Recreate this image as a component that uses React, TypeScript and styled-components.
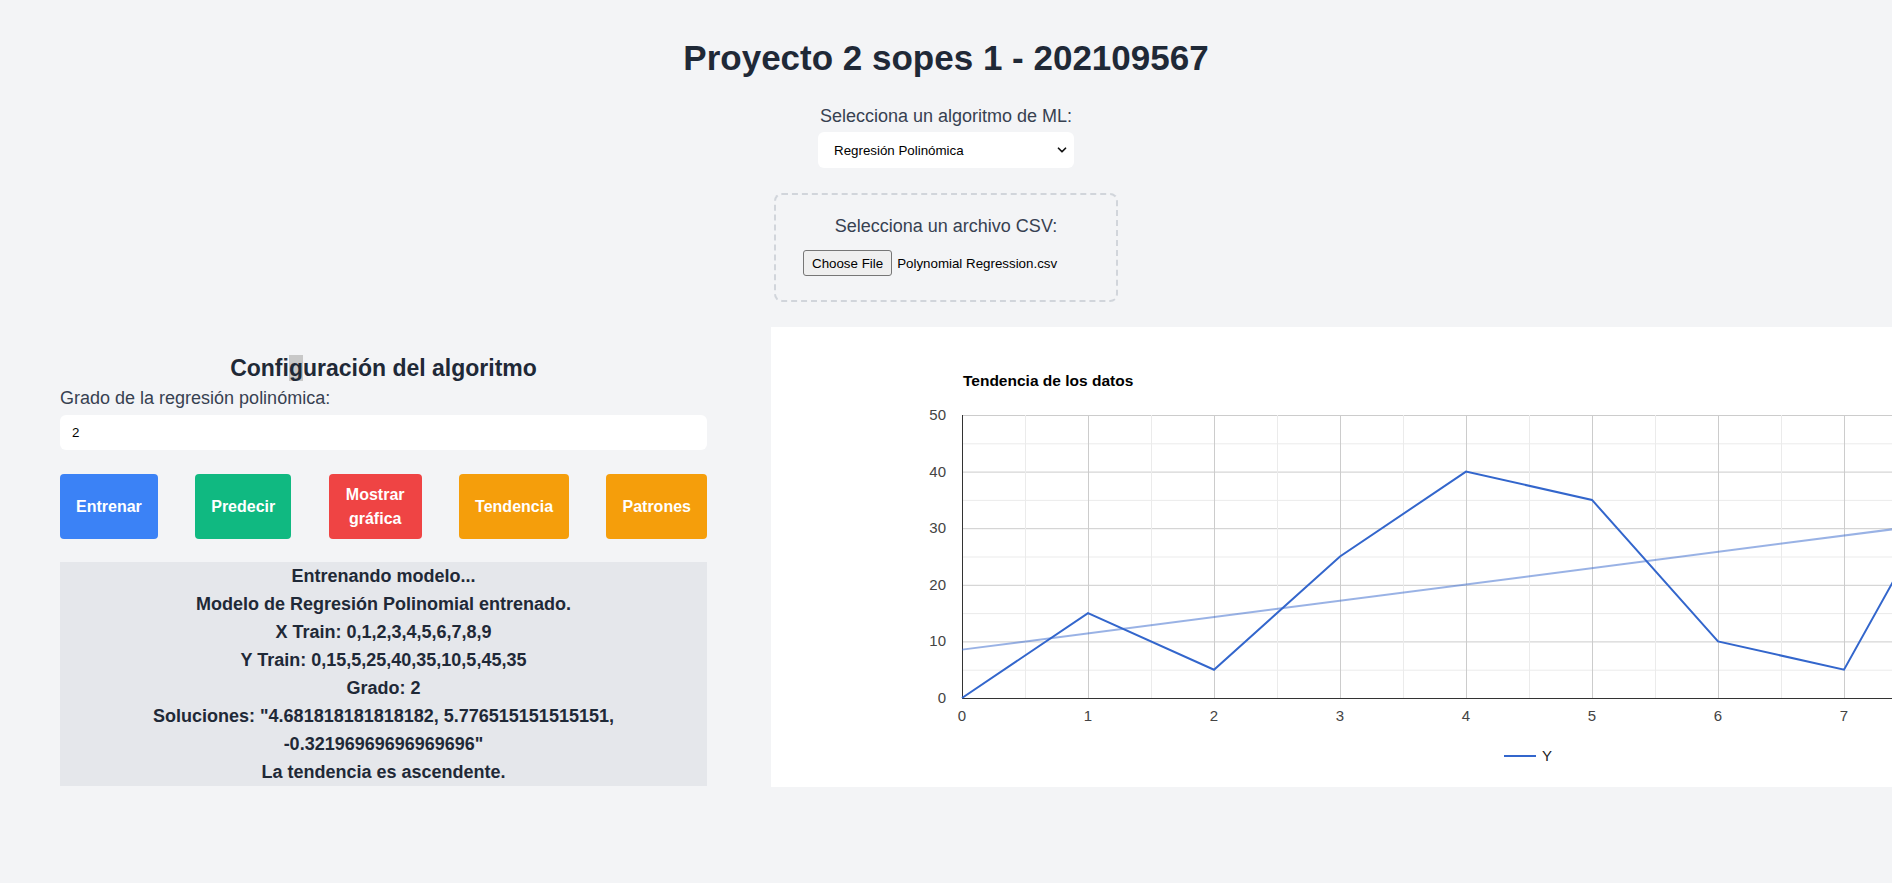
import type React from "react"
import styled, { createGlobalStyle } from "styled-components"
import { ChevronDown } from "lucide-react"

const X_TRAIN = [0, 1, 2, 3, 4, 5, 6, 7, 8, 9]
const Y_TRAIN = [0, 15, 5, 25, 40, 35, 10, 5, 45, 35]

// chart geometry, in px inside the chart card
const CARD_W = 1121
const CARD_H = 460
const PLOT_LEFT = 191
const PLOT_TOP = 88
const PLOT_W = 1134
const PLOT_H = 283
const X_MAX = 9
const Y_MAX = 50

const px = (x: number) => PLOT_LEFT + (x / X_MAX) * PLOT_W
const py = (y: number) => PLOT_TOP + PLOT_H - (y / Y_MAX) * PLOT_H

// least squares line for the trendline
const trend = () => {
  const n = X_TRAIN.length
  const mx = X_TRAIN.reduce((a, b) => a + b, 0) / n
  const my = Y_TRAIN.reduce((a, b) => a + b, 0) / n
  let sxy = 0
  let sxx = 0
  X_TRAIN.forEach((x, i) => {
    sxy += (x - mx) * (Y_TRAIN[i] - my)
    sxx += (x - mx) * (x - mx)
  })
  const slope = sxy / sxx
  return { slope, intercept: my - slope * mx }
}

const TrendChart: React.FC = () => {
  const { slope, intercept } = trend()
  const points = X_TRAIN.map((x, i) => `${px(x)},${py(Y_TRAIN[i])}`).join(" ")
  const halfSteps = Array.from({ length: X_MAX * 2 + 1 }, (_, i) => i / 2)
  const ySteps = Array.from({ length: 11 }, (_, i) => i * 5)
  // the card is narrower than the plot, so only ticks that fit get a label
  const visibleTicks = X_TRAIN.filter((v) => px(v) + 6 < CARD_W)

  return (
    <svg width={CARD_W} height={CARD_H} fontFamily="'Liberation Sans', Arial, sans-serif">
      <text x={192} y={59} fontSize={15.5} fontWeight="bold" fill="#000">
        Tendencia de los datos
      </text>

      {ySteps.map((v) => (
        <line
          key={`h${v}`}
          x1={PLOT_LEFT}
          x2={PLOT_LEFT + PLOT_W}
          y1={py(v) + 0.5}
          y2={py(v) + 0.5}
          stroke={v % 10 === 0 ? "#cccccc" : "#ebebeb"}
        />
      ))}
      {halfSteps.map((v) => (
        <line
          key={`v${v}`}
          x1={px(v) + 0.5}
          x2={px(v) + 0.5}
          y1={PLOT_TOP}
          y2={PLOT_TOP + PLOT_H}
          stroke={Number.isInteger(v) ? "#cccccc" : "#ebebeb"}
        />
      ))}

      <line x1={PLOT_LEFT + 0.5} x2={PLOT_LEFT + 0.5} y1={PLOT_TOP} y2={PLOT_TOP + PLOT_H} stroke="#333" />
      <line x1={PLOT_LEFT} x2={PLOT_LEFT + PLOT_W} y1={py(0) + 0.5} y2={py(0) + 0.5} stroke="#333" />

      {ySteps
        .filter((v) => v % 10 === 0)
        .map((v) => (
          <text key={`yl${v}`} x={175} y={py(v) + 5} fontSize={15} fill="#444" textAnchor="end">
            {v}
          </text>
        ))}
      {visibleTicks.map((v) => (
        <text key={`xl${v}`} x={px(v)} y={394} fontSize={15} fill="#444" textAnchor="middle">
          {v}
        </text>
      ))}

      <line
        x1={px(0)}
        y1={py(intercept)}
        x2={px(X_MAX)}
        y2={py(intercept + slope * X_MAX)}
        stroke="#3366cc"
        strokeOpacity={0.5}
        strokeWidth={2}
      />
      <polyline points={points} fill="none" stroke="#3366cc" strokeWidth={2} />

      <line x1={733} x2={765} y1={429} y2={429} stroke="#3366cc" strokeWidth={2} />
      <text x={771} y={434} fontSize={15} fill="#222">
        Y
      </text>
    </svg>
  )
}

const App: React.FC = () => {
  return (
    <>
      <GlobalStyle />
      <Page>
        <Header>
          <Title>Proyecto 2 sopes 1 - 202109567</Title>
          <FieldLabel>Selecciona un algoritmo de ML:</FieldLabel>
          <SelectWrap>
            <Select defaultValue="poly">
              <option value="poly">Regresión Polinómica</option>
            </Select>
            <SelectArrow size={14} strokeWidth={3} />
          </SelectWrap>
          <UploadBox>
            <FieldLabel>Selecciona un archivo CSV:</FieldLabel>
            <FileRow>
              <FileButton type="button">Choose File</FileButton>
              <FileName>Polynomial Regression.csv</FileName>
            </FileRow>
          </UploadBox>
        </Header>

        <Main>
          <ConfigColumn>
            <SectionTitle>
              Confi<Selected>g</Selected>uración del algoritmo
            </SectionTitle>
            <InputLabel>Grado de la regresión polinómica:</InputLabel>
            <NumberInput type="text" defaultValue="2" />
            <ButtonRow>
              <ActionButton $color="#3b82f6">Entrenar</ActionButton>
              <ActionButton $color="#10b981">Predecir</ActionButton>
              <ActionButton $color="#ef4444" $maxWidth={93}>
                Mostrar gráfica
              </ActionButton>
              <ActionButton $color="#f59e0b">Tendencia</ActionButton>
              <ActionButton $color="#f59e0b">Patrones</ActionButton>
            </ButtonRow>
            <OutputBox>
              <OutputLine>Entrenando modelo...</OutputLine>
              <OutputLine>Modelo de Regresión Polinomial entrenado.</OutputLine>
              <OutputLine>X Train: 0,1,2,3,4,5,6,7,8,9</OutputLine>
              <OutputLine>Y Train: 0,15,5,25,40,35,10,5,45,35</OutputLine>
              <OutputLine>Grado: 2</OutputLine>
              <OutputLine>Soluciones: "4.681818181818182, 5.776515151515151, -0.32196969696969696"</OutputLine>
              <OutputLine>La tendencia es ascendente.</OutputLine>
            </OutputBox>
          </ConfigColumn>

          <ChartCard>
            <TrendChart />
          </ChartCard>
        </Main>
      </Page>
    </>
  )
}

const GlobalStyle = createGlobalStyle`
  html, body {
    margin: 0;
    background-color: #f3f4f6;
    overflow: hidden;
  }
  body {
    font-family: "Liberation Sans", Arial, sans-serif;
    color: #1f2937;
  }
`

const Page = styled.div`
  min-height: 883px;
  padding: 38px 0 0 60px;
  box-sizing: border-box;
`

const Header = styled.header`
  display: flex;
  flex-direction: column;
  align-items: center;
  width: 1772px;
`

const Title = styled.h1`
  margin: 0;
  font-size: 35px;
  line-height: 40px;
  font-weight: bold;
  color: #1f2937;
`

const FieldLabel = styled.label`
  display: block;
  margin-top: 24px;
  font-size: 18px;
  line-height: 28px;
  color: #374151;
`

const SelectWrap = styled.div`
  position: relative;
  margin-top: 2px;
  width: 256px;
`

const Select = styled.select`
  appearance: none;
  width: 100%;
  height: 36px;
  padding: 0 16px;
  border: none;
  border-radius: 6px;
  background-color: #ffffff;
  font-family: "Liberation Sans", Arial, sans-serif;
  font-size: 13.33px;
  color: #000;
`

const SelectArrow = styled(ChevronDown)`
  position: absolute;
  right: 5px;
  top: 11px;
  color: #111;
  pointer-events: none;
`

const UploadBox = styled.div`
  display: flex;
  flex-direction: column;
  align-items: center;
  margin-top: 25px;
  width: 344px;
  padding: 17px 0 24px;
  box-sizing: border-box;
  border: 2px dashed #d1d5db;
  border-radius: 8px;

  & > label {
    margin-top: 0;
  }
`

const FileRow = styled.div`
  display: flex;
  align-items: center;
  gap: 5px;
  margin-top: 10px;
  width: 286px;
`

const FileButton = styled.button`
  flex-shrink: 0;
  height: 26px;
  padding: 0 8px;
  border: 1px solid #767676;
  border-radius: 3px;
  background-color: #efefef;
  font-family: "Liberation Sans", Arial, sans-serif;
  font-size: 13.33px;
  color: #000;
  white-space: nowrap;
`

const FileName = styled.span`
  font-size: 13.33px;
  color: #000;
  white-space: nowrap;
`

const Main = styled.main`
  display: flex;
  align-items: flex-start;
  gap: 64px;
  margin-top: 25px;
`

const ConfigColumn = styled.section`
  display: flex;
  flex-direction: column;
  flex-shrink: 0;
  width: 647px;
  padding-top: 25px;
`

const SectionTitle = styled.h2`
  margin: 0;
  text-align: center;
  font-size: 23px;
  line-height: 32px;
  font-weight: bold;
  color: #1f2937;
`

const Selected = styled.span`
  background-color: #c8c8c8;
`

const InputLabel = styled.label`
  font-size: 18px;
  line-height: 28px;
  color: #374151;
`

const NumberInput = styled.input`
  margin-top: 3px;
  height: 35px;
  padding: 0 12px;
  border: none;
  border-radius: 6px;
  background-color: #ffffff;
  font-family: "Liberation Sans", Arial, sans-serif;
  font-size: 13.33px;
  color: #000;
  outline: none;
`

const ButtonRow = styled.div`
  display: flex;
  justify-content: space-between;
  margin-top: 24px;
`

const ActionButton = styled.button<{ $color: string; $maxWidth?: number }>`
  min-height: 65px;
  max-width: ${(p) => (p.$maxWidth ? `${p.$maxWidth}px` : "none")};
  padding: 8px 16px;
  border: none;
  border-radius: 4px;
  background-color: ${(p) => p.$color};
  color: #ffffff;
  font-family: "Liberation Sans", Arial, sans-serif;
  font-size: 16px;
  line-height: 24px;
  font-weight: bold;
`

const OutputBox = styled.div`
  margin-top: 23px;
  background-color: #e5e7eb;
  text-align: center;
`

const OutputLine = styled.p`
  margin: 0;
  font-size: 18px;
  line-height: 28px;
  font-weight: bold;
  color: #1f2937;
`

const ChartCard = styled.div`
  flex-shrink: 0;
  width: ${CARD_W}px;
  height: ${CARD_H}px;
  overflow: hidden;
  background-color: #ffffff;
`

export default App
